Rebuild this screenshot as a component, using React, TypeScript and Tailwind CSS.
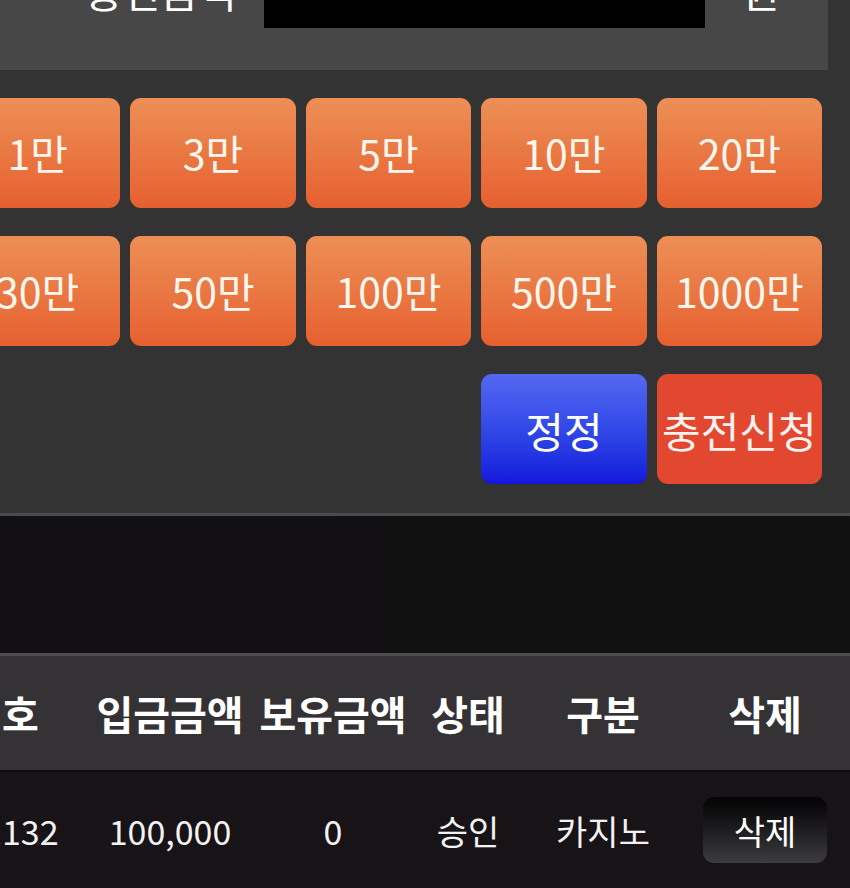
import React from "react";

const amounts = ["1만", "3만", "5만", "10만", "20만", "30만", "50만", "100만", "500만", "1000만"];

const headers = ["번호", "입금금액", "보유금액", "상태", "구분", "삭제"];

const rows = [{ no: "101132", amount: "100,000", balance: "0", status: "승인", kind: "카지노" }];

const cols = "grid-cols-[164px_172px_154px_116px_154px_170px]";

export default function App() {
  return (
    <div
      className="w-[850px] h-[888px] overflow-hidden bg-[#333333] text-white"
      style={{ fontFamily: '"Noto Sans CJK KR", "Noto Sans", sans-serif' }}
    >
      <div className="-ml-[80px] -mt-[34px] w-[930px]">
        {/* charge amount input */}
        <div className="mr-[22px] flex items-start bg-[#474747] pb-[42px] pl-[165px]">
          <span className="-mt-[7px] w-[179px] text-[41px] leading-[62px] text-white">충전금액</span>
          <div className="h-[62px] w-[441px] bg-black" />
          <span className="-mt-[7px] ml-[37px] text-[41px] leading-[62px] text-white">원</span>
        </div>

        {/* quick amount buttons */}
        <div className="grid grid-cols-5 gap-x-[10px] gap-y-[28px] pb-[29px] pl-[35px] pr-[28px] pt-[28px]">
          {amounts.map((a) => (
            <button
              key={a}
              className="flex h-[110px] items-center justify-center rounded-[11px] bg-gradient-to-b from-[#ec8f55] to-[#e65f2f] text-[41px] font-normal text-[#fff6ee]"
            >
              {a}
            </button>
          ))}
          <button className="col-start-4 flex h-[110px] items-center justify-center rounded-[11px] bg-gradient-to-b from-[#5568f2] to-[#1515dc] text-[42px] text-white">
            정정
          </button>
          <button className="flex h-[110px] items-center justify-center rounded-[11px] bg-[#e2472f] text-[42px] text-[#fff1ee]">
            충전신청
          </button>
        </div>

        <div className="h-[3px] bg-[#4b4a4c]" />
        <div className="h-[137px] bg-gradient-to-r from-[#131013] to-[#111111]" />
        <div className="h-[3px] bg-[#4d4b4e]" />

        {/* history table */}
        <div className={`grid ${cols} h-[114px] items-center bg-[#353236] text-center text-[40px] font-bold text-white`}>
          {headers.map((h) => (
            <div key={h} className="whitespace-nowrap">
              {h}
            </div>
          ))}
        </div>
        <div className="h-[2px] bg-[#0e0c0e]" />
        {rows.map((r) => (
          <div
            key={r.no}
            className={`grid ${cols} h-[116px] items-center bg-[#171316] text-center text-[34px] text-[#f2f2f2]`}
          >
            <div>{r.no}</div>
            <div>{r.amount}</div>
            <div>{r.balance}</div>
            <div>{r.status}</div>
            <div>{r.kind}</div>
            <div className="flex justify-center">
              <button className="flex h-[66px] w-[124px] items-center justify-center rounded-[11px] bg-gradient-to-b from-[#050405] to-[#3c3b3d] text-[34px] text-white">
                삭제
              </button>
            </div>
          </div>
        ))}
        <div className="h-[200px] bg-[#171316]" />
      </div>
    </div>
  );
}
